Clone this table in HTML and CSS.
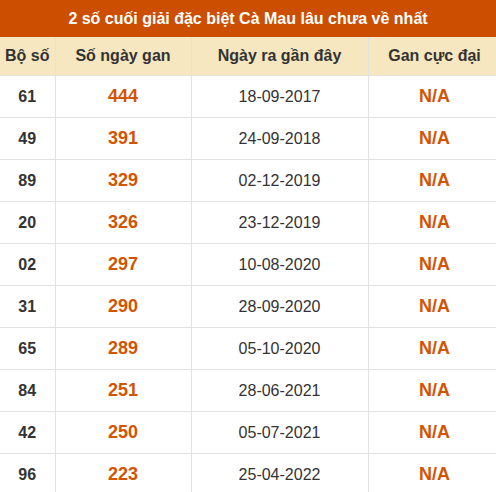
FILE: index.html
```html
<!DOCTYPE html>
<html lang="vi">
<head>
<meta charset="utf-8">
<link rel="stylesheet" href="styles.css">
</head>
<body>
<div class="wrap">
  <div class="title">2 số cuối giải đặc biệt Cà Mau lâu chưa về nhất</div>
  <table class="gan">
    <colgroup>
      <col class="c1"><col class="c2"><col class="c3"><col class="c4">
    </colgroup>
    <thead>
      <tr><th>Bộ số</th><th>Số ngày gan</th><th>Ngày ra gần đây</th><th>Gan cực đại</th></tr>
    </thead>
    <tbody>
      <tr><td class="bo">61</td><td class="num">444</td><td class="date">18-09-2017</td><td class="na">N/A</td></tr>
      <tr><td class="bo">49</td><td class="num">391</td><td class="date">24-09-2018</td><td class="na">N/A</td></tr>
      <tr><td class="bo">89</td><td class="num">329</td><td class="date">02-12-2019</td><td class="na">N/A</td></tr>
      <tr><td class="bo">20</td><td class="num">326</td><td class="date">23-12-2019</td><td class="na">N/A</td></tr>
      <tr><td class="bo">02</td><td class="num">297</td><td class="date">10-08-2020</td><td class="na">N/A</td></tr>
      <tr><td class="bo">31</td><td class="num">290</td><td class="date">28-09-2020</td><td class="na">N/A</td></tr>
      <tr><td class="bo">65</td><td class="num">289</td><td class="date">05-10-2020</td><td class="na">N/A</td></tr>
      <tr><td class="bo">84</td><td class="num">251</td><td class="date">28-06-2021</td><td class="na">N/A</td></tr>
      <tr><td class="bo">42</td><td class="num">250</td><td class="date">05-07-2021</td><td class="na">N/A</td></tr>
      <tr><td class="bo">96</td><td class="num">223</td><td class="date">25-04-2022</td><td class="na">N/A</td></tr>
    </tbody>
  </table>
</div>
</body>
</html>
```
FILE: styles.css
```css
html, body {
  margin: 0;
  padding: 0;
  background: #fff;
  overflow: hidden;
}
body {
  font-family: "Liberation Sans", Arial, sans-serif;
  color: #333;
}
.wrap {
  width: 496px;
}
.title {
  height: 37px;
  line-height: 37px;
  background: #cc4e00;
  color: #fff;
  font-weight: bold;
  font-size: 16px;
  text-align: center;
}
.gan {
  border-collapse: collapse;
  table-layout: fixed;
  width: 501px;
}
.c1 { width: 55px; }
.c2 { width: 136px; }
.c3 { width: 177px; }
.c4 { width: 133px; }
.gan th, .gan td {
  border: 1px solid #e2e2e2;
  text-align: center;
  padding: 0;
}
.gan tr > :first-child { border-left: none; }
.gan thead tr > * { border-top: none; }
.gan th {
  height: 38px;
  background: #f6e7c0;
  font-size: 16px;
  font-weight: bold;
  color: #333;
}
.gan td {
  height: 41px;
}
.bo {
  font-size: 16px;
  font-weight: bold;
  color: #333;
}
.num {
  font-size: 18px;
  font-weight: bold;
  color: #d35400;
}
.date {
  font-size: 16px;
  color: #333;
}
.na {
  font-size: 18px;
  font-weight: bold;
  color: #d35400;
}
```
